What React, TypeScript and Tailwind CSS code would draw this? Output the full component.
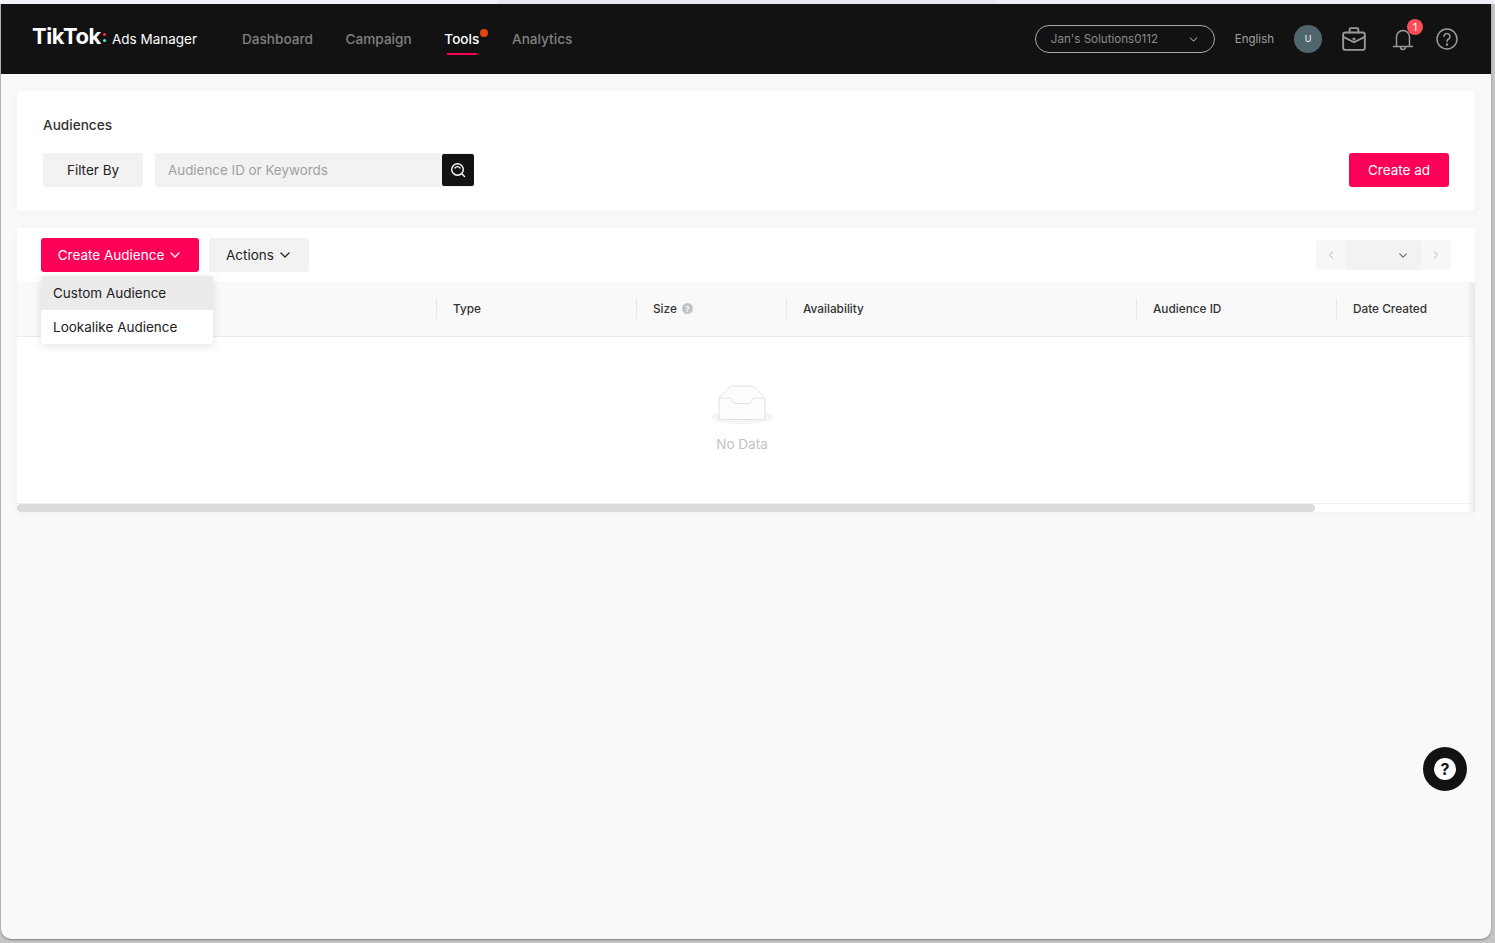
import React from "react";

const Chevron = ({ className = "" }: { className?: string }) => (
  <svg viewBox="0 0 10 6" className={className} fill="none" stroke="currentColor" strokeWidth="1.3" strokeLinecap="round" strokeLinejoin="round">
    <path d="M1 1l4 4 4-4" />
  </svg>
);

const Nav = ({ children, active }: { children: React.ReactNode; active?: boolean }) => (
  <div className={`relative text-[13.6px] leading-[20px] font-medium ${active ? "text-white" : "text-[#808080]"}`}>
    {children}
    {active && (
      <>
        <span className="absolute left-[2.5px] top-[24px] h-[2px] w-[30px] bg-[#fe0058]" />
        <span className="absolute left-[35.500px] top-0 h-[8px] w-[8px] rounded-full bg-[#e2450f]" />
      </>
    )}
  </div>
);

const Th = ({ w, children }: { w: string; children: React.ReactNode }) => (
  <div className={`${w} flex h-[20px] items-center border-l border-[#e8e8e8] pl-4 pt-[1px] text-[11.8px] font-medium text-[#333]`}>{children}</div>
);

export default function App() {
  return (
    <div className="relative flex h-[943px] w-[1495px] flex-col overflow-hidden bg-[#c4c4c4] font-['Inter','Liberation_Sans',sans-serif]">
      <div className="flex h-[4px] w-full shrink-0">
        <div className="w-[497px] bg-[#f3f3fa]" />
        <div className="w-[498px] bg-[#e9e9f0]" />
        <div className="flex-1 bg-[#eeeef5]" />
      </div>
      <div className="ml-[1px] mr-[4px] flex h-[935px] flex-col overflow-hidden rounded-b-[10px] bg-[#f9f9f9] shadow-[0_1px_2px_rgba(0,0,0,0.35)]">
        <header className="flex h-[70px] shrink-0 items-center bg-[#121212] pl-[31px] pr-[33px]">
          <div className="flex w-[210px] items-center">
            <span className="mb-[6px] text-[22px] font-bold leading-none tracking-[-0.4px] text-white">TikTok</span>
            <span className="mb-[6px] ml-[2px] mr-[6px] flex flex-col gap-[3px] pt-[3px]">
              <span className="h-[3px] w-[3px] rounded-full bg-[#fe2c55]" />
              <span className="h-[3px] w-[3px] rounded-full bg-[#25f4ee]" />
            </span>
            <span className="text-[13.5px] text-white">Ads Manager</span>
          </div>
          <nav className="flex items-center gap-[32.7px]">
            <Nav>Dashboard</Nav>
            <Nav>Campaign</Nav>
            <Nav active>Tools</Nav>
            <Nav>Analytics</Nav>
          </nav>
          <div className="ml-auto flex items-center">
            <div className="flex h-[28px] w-[180px] items-center justify-between rounded-full border border-[#a8a8a8] pl-[15px] pr-[16px] text-[11.6px] text-[#8a8a8a]">
              <span className="pt-[1px]">Jan's Solutions0112</span>
              <Chevron className="h-[5px] w-[9px] text-[#8a8a8a]" />
            </div>
            <span className="ml-[20px] pt-[1px] text-[11.5px] text-[#a0a0a0]">English</span>
            <div className="ml-[20px] flex h-[28px] w-[28px] items-center justify-center rounded-full bg-[#4f666c] text-[9px] text-white">U</div>
            <svg viewBox="0 0 24 24" className="ml-[19px] h-[26px] w-[26px] text-[#9a9a9a]" fill="none" stroke="currentColor" strokeWidth="1.7" strokeLinejoin="round" strokeLinecap="round">
              <rect x="2" y="6" width="20" height="16" rx="2" />
              <path d="M8 6V3a1 1 0 0 1 1-1h6a1 1 0 0 1 1 1v3" />
              <path d="M2 10l10 5 10-5" />
              <circle cx="12" cy="12" r="0.6" fill="currentColor" />
            </svg>
            <div className="relative ml-[23px] h-[26px] w-[26px] text-[#9a9a9a]">
              <svg viewBox="0 0 26 26" className="h-[26px] w-[26px]" fill="none" stroke="currentColor" strokeWidth="1.5" strokeLinejoin="round" strokeLinecap="round">
                <path d="M6.5 20V11a6.5 6.500 0 0 1 13 0v9" />
                <path d="M3.5 20.5h19" />
                <path d="M10.5 21a2.5 2.5 0 0 0 5 0" />
              </svg>
              <span className="absolute left-[17px] top-[-7px] flex h-[16px] w-[16px] items-center justify-center rounded-full bg-[#fa4d56] text-[11px] leading-none text-white">1</span>
            </div>
            <svg viewBox="0 0 22 22" className="ml-[20px] h-[22px] w-[22px] text-[#9a9a9a]" fill="none" stroke="currentColor" strokeWidth="1.5" strokeLinecap="round">
              <circle cx="11" cy="11" r="10" />
              <path d="M8 8.5a3 3 0 1 1 4.6 2.500c-1 .6-1.6 1.2-1.6 2.4" />
              <circle cx="11" cy="16.5" r="0.5" fill="currentColor" />
            </svg>
          </div>
        </header>

        <main className="flex flex-1 flex-col gap-[17px] px-[16px] pt-[17px]">
          <section className="h-[120px] rounded-[4px] bg-white px-[26px] pt-[24px] shadow-[0_2px_8px_rgba(0,0,0,0.04)]">
            <h1 className="text-[13.6px] font-medium leading-[20px] text-[#333]">Audiences</h1>
            <div className="mt-[18px] flex items-center">
              <button className="h-[34px] w-[100px] rounded-[2px] bg-[#f2f2f2] text-[13.5px] text-[#222]">Filter By</button>
              <div className="ml-[12px] flex h-[34px] w-[319px] items-center overflow-hidden rounded-[2px] bg-[#f2f2f2]">
                <span className="flex-1 pl-[13px] text-[13.4px] text-[#a0a0a0]">Audience ID or Keywords</span>
                <span className="flex h-[32px] w-[32px] items-center justify-center rounded-[2px] bg-[#121212]">
                  <svg viewBox="0 0 16 16" className="h-[16px] w-[16px]" fill="none" stroke="white" strokeWidth="1.4" strokeLinecap="round">
                    <circle cx="7.500" cy="7.500" r="5.800" />
                    <path d="M12 12l2.500 2.500" />
                    <path d="M5 6a3 3 0 0 1 5 0" />
                  </svg>
                </span>
              </div>
              <button className="ml-auto h-[34px] w-[100px] rounded-[3px] bg-[#fe0058] text-[13.5px] text-white">Create ad</button>
            </div>
          </section>

          <section className="relative h-[284px] rounded-[2px] bg-white shadow-[0_2px_8px_rgba(0,0,0,0.04)]">
            <div className="flex h-[54px] items-center pl-[24px] pr-[24px]">
              <button className="flex h-[34px] w-[158px] items-center justify-center gap-[6px] rounded-[3px] bg-[#fe0058] pr-[2px] text-[13.5px] text-white">
                Create Audience
                <Chevron className="h-[6px] w-[10px]" />
              </button>
              <button className="ml-[10px] flex h-[34px] w-[100px] items-center justify-center gap-[6px] rounded-[3px] bg-[#f2f2f2] pr-[2px] text-[13.5px] text-[#222]">
                Actions
                <Chevron className="h-[6px] w-[10px]" />
              </button>
              <div className="ml-auto flex h-[30px] w-[135px] items-center rounded-[4px] bg-[#f7f7f7]">
                <Chevron className="ml-[11px] h-[8px] w-[8px] rotate-90 text-[#c4c4c4]" />
                <span className="ml-[11px] flex h-[30px] w-[75px] items-center justify-end rounded-[4px] bg-[#f2f2f2] pr-[14px]">
                  <Chevron className="h-[5px] w-[8px] text-[#666]" />
                </span>
                <Chevron className="ml-[11px] h-[8px] w-[8px] -rotate-90 text-[#c4c4c4]" />
              </div>
            </div>
            <div className="flex h-[55px] items-center border-b border-[#ececec] bg-[#f9f9f9]">
              <div className="w-[419px]" />
              <Th w="w-[200px]">Type</Th>
              <Th w="w-[150px]">
                Size
                <span className="mb-[2px] ml-[5px] flex h-[11px] w-[11px] items-center justify-center rounded-full bg-[#c4c4c4] text-[8px] leading-none text-white">?</span>
              </Th>
              <Th w="w-[350px]">Availability</Th>
              <Th w="w-[200px]">Audience ID</Th>
              <Th w="w-[139px]">Date Created</Th>
            </div>
            <div className="flex h-[166px] flex-col items-center pr-[8px] pt-[47px]">
              <svg viewBox="0 0 64 42" className="h-[42px] w-[64px]" fill="none">
                <ellipse cx="32" cy="33" rx="31" ry="7" fill="#f5f5f5" />
                <path d="M9 14L20 2.500a2 2 0 0 1 1.500-.5h21a2 2 0 0 1 1.500.5L55 14v19a2.500 2.500 0 0 1-2.500 2.500h-41A2.500 2.500 0 0 1 9 33z" fill="#fdfdfd" stroke="#e0e0e0" strokeWidth="1" />
                <path d="M9 14h11c2 0 2 5.500 5 5.500h14c3 0 3-5.500 5-5.500h11" fill="none" stroke="#e0e0e0" strokeWidth="1" />
              </svg>
              <span className="mt-[8px] text-[13.5px] leading-[20px] text-[#c2c2c2]">No Data</span>
            </div>
            <div className="h-[9px] border-t border-[#efefef] bg-white">
              <div className="h-[8px] w-[1298px] rounded-full bg-[#dcdcdc]" />
            </div>
            <div className="pointer-events-none absolute bottom-0 right-0 top-[54px] w-[8px] bg-gradient-to-l from-[#e8e8e8] to-transparent" />
            <div className="absolute left-[24px] top-[48px] w-[172px] overflow-hidden rounded-[3px] bg-white shadow-[0_2px_10px_rgba(0,0,0,0.12)]">
              <div className="flex h-[34px] items-center bg-[#ebebeb] pl-[12px] text-[13.5px] text-[#222]">Custom Audience</div>
              <div className="flex h-[34px] items-center pl-[12px] text-[13.5px] text-[#222]">Lookalike Audience</div>
            </div>
          </section>
        </main>
      </div>

      <div className="absolute left-[1423px] top-[747px] flex h-[44px] w-[44px] items-center justify-center rounded-full bg-[#121212]">
        <span className="flex h-[22px] w-[22px] items-center justify-center rounded-full bg-white text-[16px] font-bold leading-none text-[#121212]">?</span>
      </div>
    </div>
  );
}
